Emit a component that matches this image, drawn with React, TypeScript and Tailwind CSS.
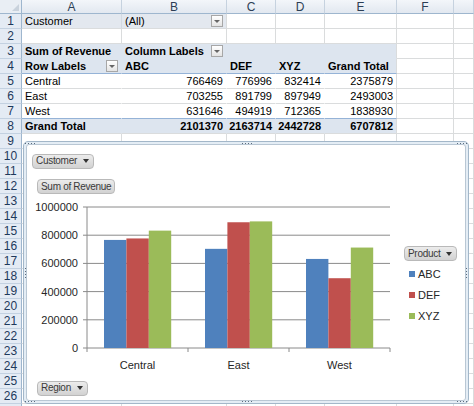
import React from "react";

const GRID = "grid grid-cols-[22px_100px_105px_49px_49px_72px_57px_1fr]";
const LINE = "border-[#dadcdd]";

type CellSpec = {
	text?: string;
	cls?: string;
	dd?: boolean;
};

function DropButton() {
	return (
		<span className="ml-auto flex h-[12px] w-[12px] shrink-0 items-center justify-center border border-[#a7a7a7] bg-gradient-to-b from-white to-[#e4e4e4]">
			<span className="h-0 w-0 border-x-[3px] border-t-[3px] border-x-transparent border-t-[#666]" />
		</span>
	);
}

function Cell({ spec }: { spec: CellSpec }) {
	return (
		<div
			className={`flex h-[15px] items-center overflow-hidden whitespace-nowrap border-b border-r px-[3px] leading-none ${spec.cls ?? LINE}`}
		>
			{spec.text}
			{spec.dd && <DropButton />}
		</div>
	);
}

const BLANK: CellSpec = {};
const HEAD = "bg-[#dde5ef] border-r-[#dde5ef] border-b-[#dde5ef] font-bold";
const HEAD4 = "bg-[#dde5ef] border-r-[#dde5ef] border-b-[#95b3d7] font-bold";
const BODY = "border-r-white border-b-[#dadcdd] justify-end";
const BODY7 = "border-r-white border-b-[#95b3d7] justify-end";
const TOTAL = "bg-[#dde5ef] border-r-[#dde5ef] border-b-[#dadcdd] font-bold justify-end";

const rows: CellSpec[][] = [
	[
		{ text: "Customer", cls: "bg-[#e3e8ef] border-r-[#d3d9e1] border-b-[#dadcdd]" },
		{ text: "(All)", cls: "bg-[#e3e8ef] border-r-[#dadcdd] border-b-[#dadcdd]", dd: true },
	],
	[],
	[
		{ text: "Sum of Revenue", cls: HEAD },
		{ text: "Column Labels", cls: HEAD, dd: true },
		{ cls: HEAD },
		{ cls: HEAD },
		{ cls: "bg-[#dde5ef] border-r-[#dadcdd] border-b-[#dde5ef]" },
	],
	[
		{ text: "Row Labels", cls: HEAD4, dd: true },
		{ text: "ABC", cls: HEAD4 },
		{ text: "DEF", cls: HEAD4 },
		{ text: "XYZ", cls: HEAD4 },
		{ text: "Grand Total", cls: "bg-[#dde5ef] border-r-[#dadcdd] border-b-[#95b3d7] font-bold" },
	],
	[
		{ text: "Central", cls: "border-r-white border-b-[#dadcdd]" },
		{ text: "766469", cls: BODY },
		{ text: "776996", cls: BODY },
		{ text: "832414", cls: BODY },
		{ text: "2375879", cls: "border-r-[#dadcdd] border-b-[#dadcdd] justify-end" },
	],
	[
		{ text: "East", cls: "border-r-white border-b-[#dadcdd]" },
		{ text: "703255", cls: BODY },
		{ text: "891799", cls: BODY },
		{ text: "897949", cls: BODY },
		{ text: "2493003", cls: "border-r-[#dadcdd] border-b-[#dadcdd] justify-end" },
	],
	[
		{ text: "West", cls: "border-r-white border-b-[#95b3d7]" },
		{ text: "631646", cls: BODY7 },
		{ text: "494919", cls: BODY7 },
		{ text: "712365", cls: BODY7 },
		{ text: "1838930", cls: "border-r-[#dadcdd] border-b-[#95b3d7] justify-end" },
	],
	[
		{ text: "Grand Total", cls: "bg-[#dde5ef] border-r-[#dde5ef] border-b-[#dadcdd] font-bold" },
		{ text: "2101370", cls: TOTAL },
		{ text: "2163714", cls: TOTAL },
		{ text: "2442728", cls: TOTAL },
		{ text: "6707812", cls: "bg-[#dde5ef] border-r-[#dadcdd] border-b-[#dadcdd] font-bold justify-end" },
	],
];

const sheetRows: CellSpec[][] = Array.from({ length: 27 }, (_, i) => {
	const r = rows[i] ?? [];
	return Array.from({ length: 7 }, (_, c) => r[c] ?? BLANK);
});

function ChartButton({ label, arrow = true }: { label: string; arrow?: boolean }) {
	return (
		<div className="inline-flex h-[15px] items-center gap-[6px] rounded-[4px] border border-[#b9b9b9] bg-gradient-to-b from-[#ececec] to-[#d2d2d2] px-[3px] text-[10px] leading-none tracking-[-0.3px] text-[#3a3a3a]">
			<span>{label}</span>
			{arrow && (
				<span className="mr-[1px] h-0 w-0 border-x-[3px] border-t-[4px] border-x-transparent border-t-[#333]" />
			)}
		</div>
	);
}

const series = [
	{ name: "ABC", color: "#4f81bd", values: [766469, 703255, 631646] },
	{ name: "DEF", color: "#c0504d", values: [776996, 891799, 494919] },
	{ name: "XYZ", color: "#9bbb59", values: [832414, 897949, 712365] },
];
const categories = ["Central", "East", "West"];

function Plot() {
	const left = 61;
	const right = 364;
	const top = 10;
	const base = 151;
	const step = (base - top) / 5;
	const cw = (right - left) / 3;
	const bw = 22.4;
	const scale = (base - top) / 1000000;
	return (
		<svg width="373" height="175" className="shrink-0" fontFamily="'Liberation Sans', Arial, sans-serif" fontSize="11">
			{[0, 1, 2, 3, 4, 5].map((i) => {
				const y = base - i * step;
				return (
					<g key={i}>
						<line x1={left - 4} x2={right} y1={y} y2={y} stroke="#8a8a8a" strokeWidth="1" />
						<text x="52" y={y + 4} textAnchor="end" fill="#262626">
							{i * 200000}
						</text>
					</g>
				);
			})}
			<line x1={left} x2={left} y1={top} y2={base} stroke="#8a8a8a" />
			{[0, 1, 2, 3].map((i) => (
				<line key={i} x1={left + i * cw} x2={left + i * cw} y1={base} y2={base + 4} stroke="#8a8a8a" />
			))}
			{categories.map((c, ci) => (
				<g key={c}>
					{series.map((s, si) => {
						const h = s.values[ci] * scale;
						return (
							<rect
								key={s.name}
								x={left + ci * cw + 17 + si * bw}
								y={base - h}
								width={bw}
								height={h}
								fill={s.color}
							/>
						);
					})}
					<text x={left + ci * cw + cw / 2} y="172" textAnchor="middle" fill="#262626">
						{c}
					</text>
				</g>
			))}
		</svg>
	);
}

function Dots({ vertical = false }: { vertical?: boolean }) {
	return (
		<div className={`flex gap-[2px] ${vertical ? "flex-col" : ""}`}>
			{[0, 1, 2, 3].map((i) => (
				<span key={i} className="h-[1px] w-[1px] bg-[#5b6b7c]" />
			))}
		</div>
	);
}

function Chart() {
	return (
		<div className="absolute left-[23px] top-[141px] h-[263px] w-[446px] rounded-[5px] border border-[#a3b7c9] bg-[#e4edf5] p-[2px]">
			<div className="flex h-full w-full flex-col rounded-[3px] border border-[#b9c7d4] bg-white">
				<div className="pl-[5px] pt-[7px]">
					<ChartButton label="Customer" />
				</div>
				<div className="mt-[9px] pl-[10px]">
					<ChartButton label="Sum of Revenue" arrow={false} />
				</div>
				<div className="-ml-[1px] mt-[3px] flex">
					<Plot />
					<div className="ml-[5px] mt-[49px] flex flex-col">
						<ChartButton label="Product" />
						<div className="mt-[6px] flex flex-col gap-[7px] pl-[5px] text-[11px] leading-[14px] text-[#262626]">
							{series.map((s) => (
								<div key={s.name} className="flex items-center gap-[3px]">
									<span className="h-[6px] w-[6px]" style={{ background: s.color }} />
									<span>{s.name}</span>
								</div>
							))}
						</div>
					</div>
				</div>
				<div className="mt-[7px] pl-[10px]">
					<ChartButton label="Region" />
				</div>
			</div>
			<div className="absolute left-[218px] top-[1px]">
				<Dots />
			</div>
			<div className="absolute bottom-[1px] left-[218px]">
				<Dots />
			</div>
			<div className="absolute left-[1px] top-[126px]">
				<Dots vertical />
			</div>
			<div className="absolute right-[1px] top-[126px]">
				<Dots vertical />
			</div>
			<div className="absolute left-[1px] top-[1px]">
				<Dots />
			</div>
			<div className="absolute right-[1px] top-[1px]">
				<Dots />
			</div>
			<div className="absolute bottom-[1px] left-[1px]">
				<Dots />
			</div>
			<div className="absolute bottom-[1px] right-[1px]">
				<Dots />
			</div>
		</div>
	);
}

export default function App() {
	return (
		<div className="relative h-[406px] w-[474px] overflow-hidden bg-white font-['Liberation_Sans',Arial,sans-serif] text-[11px] text-black">
			{/* column headers */}
			<div className={`${GRID} h-[14px]`}>
				<div className="relative border-b border-r border-[#9eb6ce] bg-[#e9eef4]">
					<span className="absolute bottom-[2px] right-[2px] h-0 w-0 border-b-[7px] border-l-[7px] border-b-[#c9d2dc] border-l-transparent" />
				</div>
				{["A", "B", "C", "D", "E", "F", ""].map((c, i) => (
					<div
						key={i}
						className="flex items-center justify-center border-b border-r border-b-[#9eb6ce] border-r-[#c6d2df] bg-gradient-to-b from-[#f3f6fa] to-[#e2e8f0] text-[12px] leading-none text-[#2c3e55]"
					>
						{c}
					</div>
				))}
			</div>
			{sheetRows.map((r, ri) => (
				<div key={ri} className={GRID}>
					<div className="flex h-[15px] items-center justify-center border-b border-r border-b-[#c3d1e1] border-r-[#9eb6ce] bg-[#e4ebf4] text-[12px] leading-none text-[#1e395b]">
						{ri < 26 ? ri + 1 : ""}
					</div>
					{r.map((c, ci) => (
						<Cell key={ci} spec={c} />
					))}
				</div>
			))}
			<Chart />
		</div>
	);
}
